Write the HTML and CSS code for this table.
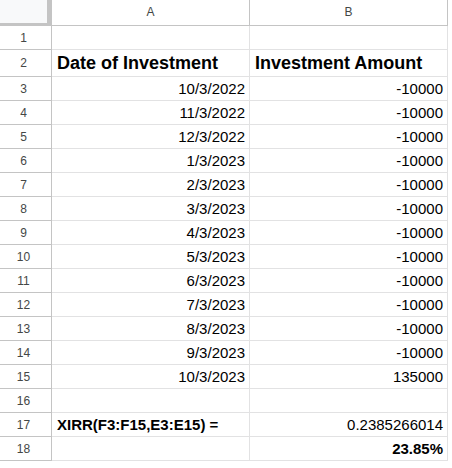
FILE: index.html
```html
<!DOCTYPE html>
<html>
<head>
<meta charset="utf-8">
<link rel="stylesheet" href="styles.css">
</head>
<body>
<div class="sheet">
  <div class="corner"></div>
  <div class="colhead">A</div>
  <div class="colhead">B</div>

  <div class="rowhead">1</div><div class="cell"></div><div class="cell"></div>
  <div class="rowhead tall">2</div><div class="cell tall head left">Date of Investment</div><div class="cell tall head left">Investment Amount</div>
  <div class="rowhead">3</div><div class="cell num">10/3/2022</div><div class="cell num">-10000</div>
  <div class="rowhead">4</div><div class="cell num">11/3/2022</div><div class="cell num">-10000</div>
  <div class="rowhead">5</div><div class="cell num">12/3/2022</div><div class="cell num">-10000</div>
  <div class="rowhead">6</div><div class="cell num">1/3/2023</div><div class="cell num">-10000</div>
  <div class="rowhead">7</div><div class="cell num">2/3/2023</div><div class="cell num">-10000</div>
  <div class="rowhead">8</div><div class="cell num">3/3/2023</div><div class="cell num">-10000</div>
  <div class="rowhead">9</div><div class="cell num">4/3/2023</div><div class="cell num">-10000</div>
  <div class="rowhead">10</div><div class="cell num">5/3/2023</div><div class="cell num">-10000</div>
  <div class="rowhead">11</div><div class="cell num">6/3/2023</div><div class="cell num">-10000</div>
  <div class="rowhead">12</div><div class="cell num">7/3/2023</div><div class="cell num">-10000</div>
  <div class="rowhead">13</div><div class="cell num">8/3/2023</div><div class="cell num">-10000</div>
  <div class="rowhead">14</div><div class="cell num">9/3/2023</div><div class="cell num">-10000</div>
  <div class="rowhead">15</div><div class="cell num">10/3/2023</div><div class="cell num">135000</div>
  <div class="rowhead">16</div><div class="cell"></div><div class="cell"></div>
  <div class="rowhead">17</div><div class="cell left bold">XIRR(F3:F15,E3:E15) =</div><div class="cell num">0.2385266014</div>
  <div class="rowhead">18</div><div class="cell"></div><div class="cell num bold">23.85%</div>
</div>
</body>
</html>
```

FILE: styles.css
```css
html, body {
  margin: 0;
  padding: 0;
  background: #fff;
}

.sheet {
  display: grid;
  grid-template-columns: 52px 198px 198px;
  grid-template-rows: 26px 24px 27px;
  grid-auto-rows: 24px;
  font-family: "Liberation Sans", Arial, sans-serif;
  color: #000;
}

.corner {
  box-sizing: border-box;
  background: #f8f9fa;
  border-right: 5px solid #c4c4c4;
  border-bottom: 3px solid #c4c4c4;
}

.colhead {
  box-sizing: border-box;
  border-right: 1px solid #c4c4c4;
  border-bottom: 1px solid #c4c4c4;
  color: #444746;
  font-size: 12px;
  display: flex;
  align-items: center;
  justify-content: center;
  padding-bottom: 1px;
}

.rowhead {
  box-sizing: border-box;
  border-right: 1px solid #c4c4c4;
  border-bottom: 1px solid #c4c4c4;
  color: #444746;
  font-size: 12px;
  display: flex;
  align-items: center;
  justify-content: center;
  padding-right: 4px;
}

.cell {
  box-sizing: border-box;
  border-right: 1px solid #e2e2e3;
  border-bottom: 1px solid #e2e2e3;
  font-size: 15px;
  line-height: 17px;
  display: flex;
  align-items: flex-end;
  padding: 0 4px 3px 5px;
  white-space: nowrap;
  overflow: hidden;
}

.num {
  justify-content: flex-end;
}

.left {
  justify-content: flex-start;
}

.bold {
  font-weight: bold;
}

.head {
  font-size: 18px;
  font-weight: bold;
  line-height: 20px;
  padding-bottom: 3px;
}
```
